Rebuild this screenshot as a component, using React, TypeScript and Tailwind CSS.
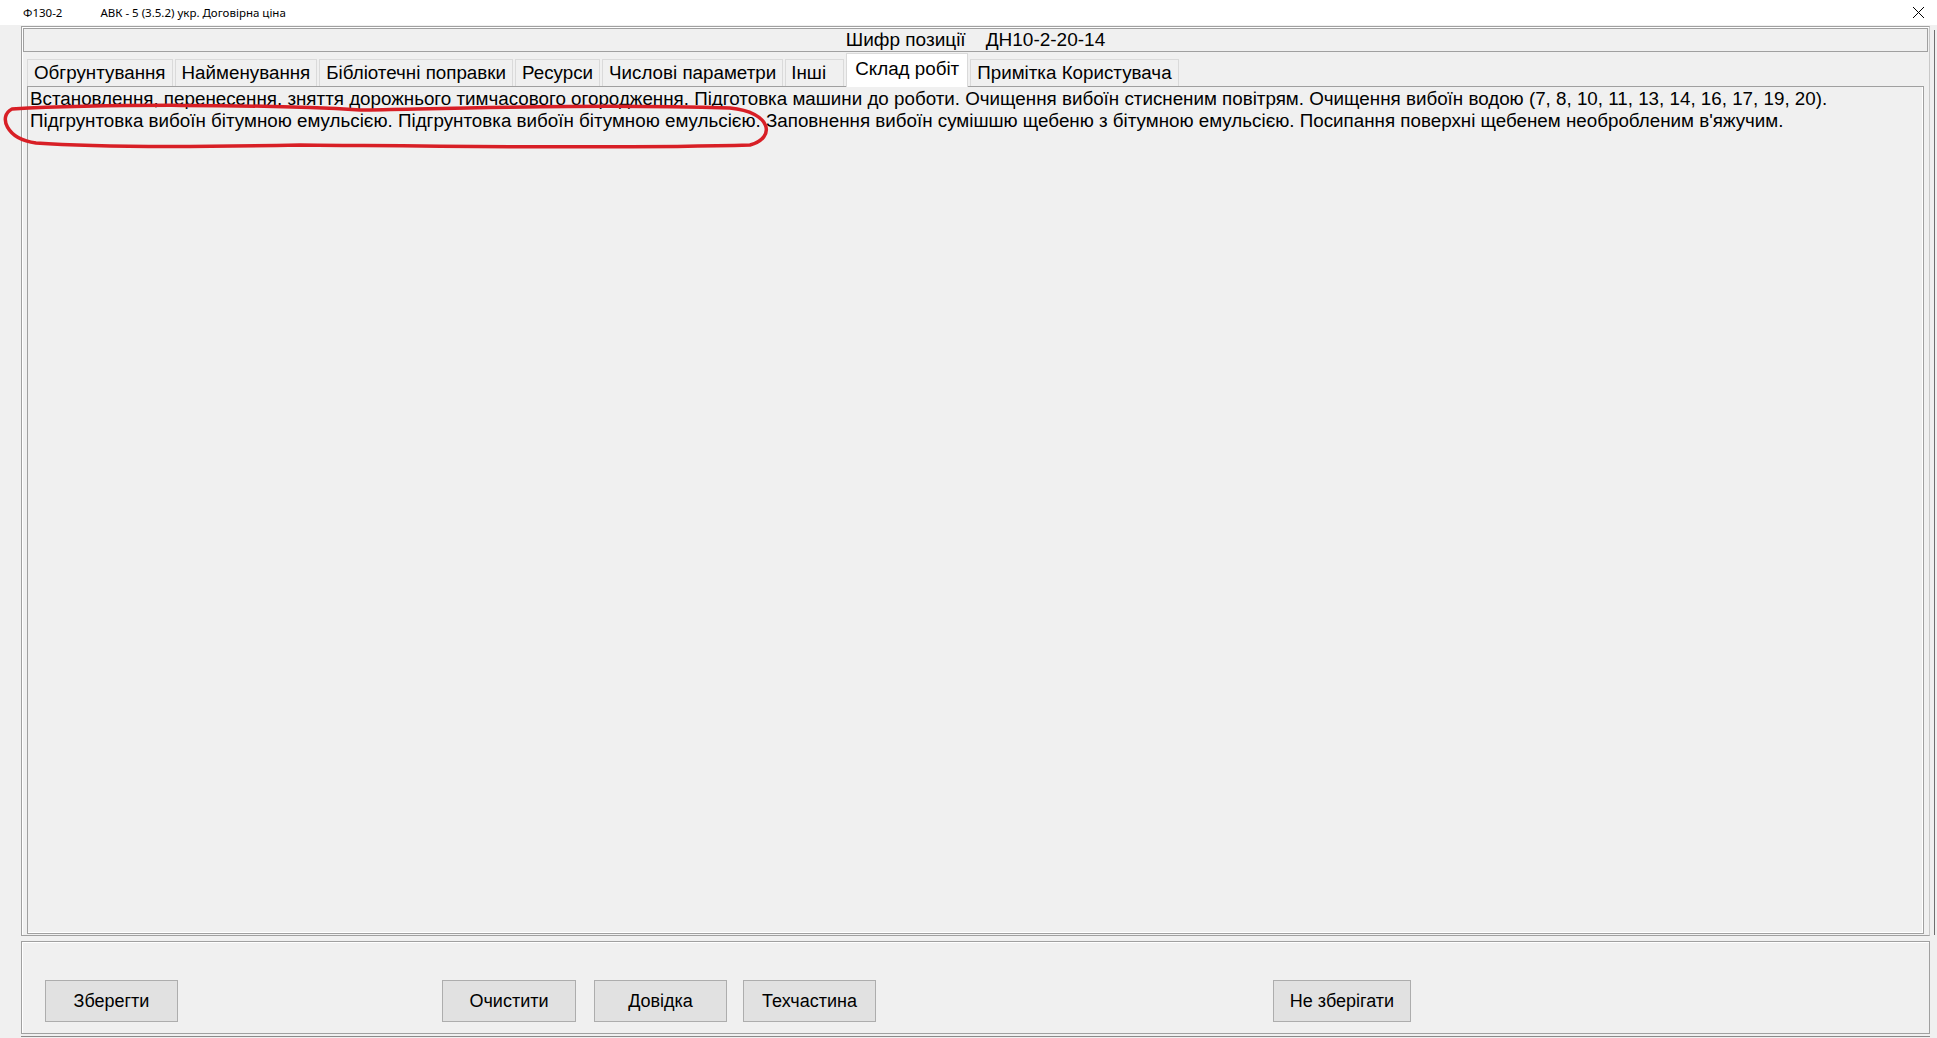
import React from "react";

const tabs = [
  "Обгрунтування",
  "Найменування",
  "Бібліотечні поправки",
  "Ресурси",
  "Числові параметри",
];

const sans = "font-['Liberation_Sans',Arial,sans-serif]";

function Button({ label, className = "" }: { label: string; className?: string }) {
  return (
    <button
      className={`h-[42px] border border-[#adadad] bg-[#e1e1e1] text-[18px] text-black ${className}`}
    >
      {label}
    </button>
  );
}

export default function App() {
  return (
    <div className={`relative h-[1038px] w-[1937px] overflow-hidden bg-[#f0f0f0] ${sans}`}>
      {/* title bar */}
      <div className="flex h-[25px] items-center bg-white font-['Noto_Sans',sans-serif] text-[11.5px] text-black">
        <span className="ml-[23px]">Ф130-2</span>
        <span className="ml-[38px]">АВК - 5 (3.5.2) укр. Договірна ціна</span>
        <svg className="ml-auto mr-[12px]" width="13" height="13" viewBox="0 0 13 13">
          <path d="M1 1 L12 12 M12 1 L1 12" stroke="#000" strokeWidth="1" />
        </svg>
      </div>

      <div className="flex h-[1013px] pl-[21px] pr-[2px]">
        <div className="flex w-[1909px] flex-col">
          {/* main frame */}
          <div className="mt-[1px] flex h-[910px] flex-col border border-[#a0a0a0] border-r-[#c8c8c8] px-[1px] pt-[1px] shadow-[inset_1px_1px_0_#ffffff]">
            <div className="flex h-[24px] items-center justify-center border border-[#a0a0a0] bg-[#f0f0f0] text-[19px] text-black">
              <span>Шифр позиції</span>
              <span className="ml-[20px]">ДН10-2-20-14</span>
            </div>

            <div className="flex h-[34px] items-end pl-[4px] text-[18.8px] leading-none text-black">
              {tabs.map((t) => (
                <div
                  key={t}
                  className="mr-[2px] flex h-[27px] items-center border border-b-0 border-[#dadada] bg-[#f0f0f0] px-[6px]"
                >
                  {t}
                </div>
              ))}
              <div className="mr-[2px] flex h-[27px] w-[59px] items-center border border-b-0 border-[#dadada] bg-[#f0f0f0] px-[5px]">
                Інші
              </div>
              <div className="relative z-10 -mb-[1px] mr-[2px] flex h-[34px] items-center border border-b-0 border-[#dadada] bg-white px-[8px] pb-[3px]">
                Склад робіт
              </div>
              <div className="flex h-[27px] items-center border border-b-0 border-[#dadada] bg-[#f0f0f0] px-[6px]">
                Примітка Користувача
              </div>
            </div>

            <div className="mx-[4px] mb-[1px] flex-1 border border-[#a0a0a0] bg-[#f0f0f0] px-[2px] pt-[1px] text-[18.8px] leading-[22px] text-black shadow-[inset_-1px_-1px_0_#ffffff]">
              <div className="whitespace-nowrap">
                Встановлення, перенесення, зняття дорожнього тимчасового огородження. Підготовка машини до роботи. Очищення вибоїн стисненим повітрям. Очищення вибоїн водою (7, 8, 10, 11, 13, 14, 16, 17, 19, 20).
              </div>
              <div className="whitespace-nowrap">
                Підгрунтовка вибоїн бітумною емульсією. Підгрунтовка вибоїн бітумною емульсією. Заповнення вибоїн сумішшю щебеню з бітумною емульсією. Посипання поверхні щебенем необробленим в'яжучим.
              </div>
            </div>
          </div>

          {/* bottom panel */}
          <div className="mt-[5px] flex h-[93px] items-end border border-[#a0a0a0] pb-[11px] pl-[23px] shadow-[inset_1px_1px_0_#ffffff]">
            <Button label="Зберегти" className="w-[133px]" />
            <Button label="Очистити" className="ml-[264px] w-[134px]" />
            <Button label="Довідка" className="ml-[18px] w-[133px]" />
            <Button label="Техчастина" className="ml-[16px] w-[133px]" />
            <Button label="Не зберігати" className="ml-[397px] w-[138px]" />
          </div>
          <div className="mt-[2px] h-[2px] border-t border-[#8a8a8a]" />
        </div>
        <div className="ml-[4px] mt-[5px] h-[905px] w-[1px] bg-[#6f6f6f]" />
      </div>

      {/* hand-drawn annotation */}
      <svg
        className="pointer-events-none absolute left-0 top-0"
        width="1937"
        height="1038"
        viewBox="0 0 1937 1038"
        fill="none"
      >
        <path
          d="M 12 109 C 100 104, 260 104, 360 110 C 470 108, 600 104, 730 108 C 772 112, 776 138, 750 145 C 620 149, 420 146, 300 145 C 200 147, 90 147, 36 143 C 6 139, -2 116, 12 109"
          stroke="#d81f26"
          strokeWidth="3.5"
          strokeLinecap="round"
        />
      </svg>
    </div>
  );
}
